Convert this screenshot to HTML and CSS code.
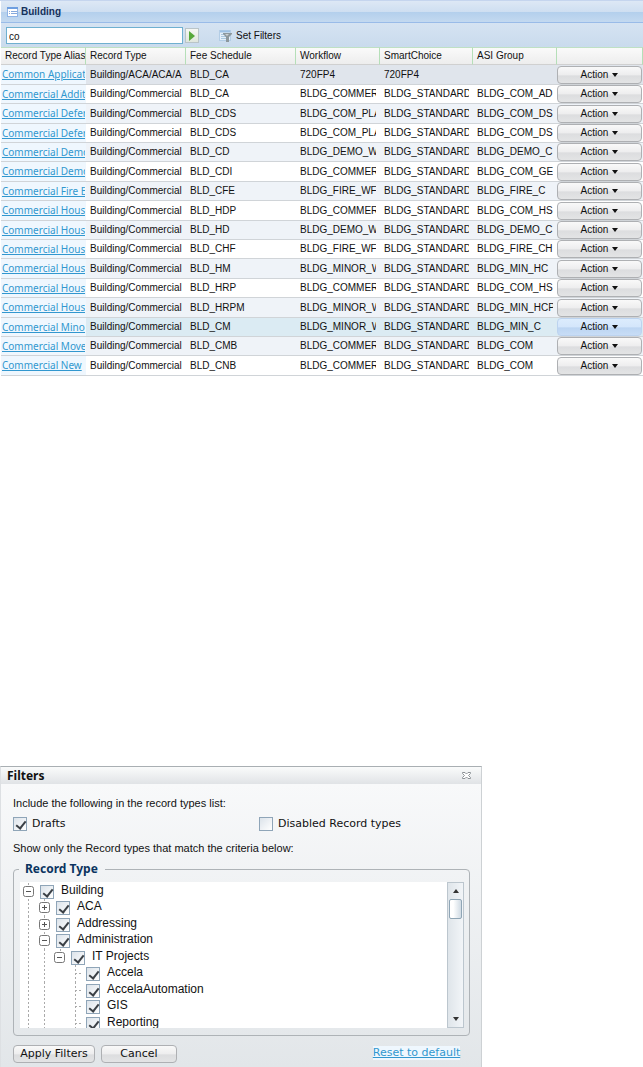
FILE: index.html
```
<!DOCTYPE html>
<html lang="en">
<head>
<meta charset="utf-8">
<title>Building</title>
<link rel="stylesheet" href="styles.css">
</head>
<body>
<main class="panel">
  <header class="panel-title">
    <svg class="list-icon" width="11" height="10" viewBox="0 0 11 10" aria-hidden="true"><rect x=".5" y=".5" width="10" height="9" fill="#fff" stroke="#8fb4e6"/><path d="M0 1h11" stroke="#6f9fe0" stroke-width="2"/><path d="M2 4.500h1M4 4.500h6M2 6.500h1M4 6.500h6" stroke="#86a9dc"/></svg>
    <h1>Building</h1>
  </header>
  <form class="toolbar">
    <input class="search" type="text" value="co" aria-label="Search record types">
    <button class="go" type="button" aria-label="Search"><svg width="6" height="10" viewBox="0 0 6 10"><path d="M0 0l6 5-6 5z" fill="#57a83a"/></svg></button>
    <button class="set-filters" type="button">
      <svg width="13" height="13" viewBox="0 0 13 13" aria-hidden="true"><rect x=".5" y="1.500" width="11" height="10" fill="#e4effa" stroke="#b3cde6"/><path d="M1 2.500h10" stroke="#9cc0e4" stroke-width="2"/><path d="M2 5.500h5M2 7.500h5M2 9.500h5" stroke="#a9c7df"/><path d="M4 4h9v1L10 8v5H7V8L4 5z" fill="#8c979d"/><path d="M6 5h4L8 7z" fill="#c9d0d3"/></svg>
      Set Filters
    </button>
  </form>
  <table class="records">
    <colgroup><col class="c-alias"><col class="c-type"><col class="c-fee"><col class="c-flow"><col class="c-smart"><col class="c-asi"><col class="c-action"></colgroup>
    <thead><tr><th>Record Type Alias</th><th>Record Type</th><th>Fee Schedule</th><th>Workflow</th><th>SmartChoice</th><th>ASI Group</th><th aria-label="Actions"></th></tr></thead>
    <tbody id="rows"></tbody>
  </table>
</main>

<section class="dialog" role="dialog" aria-labelledby="dialog-title">
  <header class="dialog-head">
    <h2 id="dialog-title">Filters</h2>
    <button class="close" type="button" aria-label="Close"><svg width="9" height="7" viewBox="0 0 9 7"><path d="M.5 .5h2.500l1.500 1.500L6 .5h2.500v1L6.500 3.500l2 2v1H6L4.500 5 3 6.500H.5v-1l2-2-2-2z" fill="#fff" stroke="#8d9296"/></svg></button>
  </header>
  <form class="dialog-body">
    <p>Include the following in the record types list:</p>
    <div class="options">
      <label><input class="check" type="checkbox" checked> Drafts</label>
      <label><input class="check" type="checkbox"> Disabled Record types</label>
    </div>
    <p>Show only the Record types that match the criteria below:</p>
    <fieldset>
      <legend>Record Type</legend>
      <div class="tree-box">
        <ul class="tree" id="tree"></ul>
        <div class="scrollbar">
          <button type="button" aria-label="Scroll up"><svg width="6" height="4" viewBox="0 0 6 4"><path d="M0 4l3-4 3 4z" fill="#333"/></svg></button>
          <span class="thumb"></span>
          <button class="down" type="button" aria-label="Scroll down"><svg width="6" height="4" viewBox="0 0 6 4"><path d="M0 0l3 4 3-4z" fill="#333"/></svg></button>
        </div>
      </div>
    </fieldset>
    <footer class="dialog-foot">
      <button class="btn apply" type="button">Apply Filters</button>
      <button class="btn cancel" type="button">Cancel</button>
      <a class="reset" href="#">Reset to default</a>
    </footer>
  </form>
</section>
<script src="app.js"></script>
</body>
</html>
```

FILE: styles.css
```
* { box-sizing: border-box; }

body {
  margin: 0;
  min-height: 100vh;
  display: flex;
  flex-direction: column;
  background: #fff;
  color: #111;
  font: 10px/14px "Liberation Sans", Arial, sans-serif;
}

button, input { font: inherit; color: inherit; margin: 0; padding: 0; }
h1, h2, p, ul { margin: 0; padding: 0; }
svg { display: block; flex: none; }

.panel { padding-left: 1px; border-top: 1px solid #c5d5ee; }

.panel-title {
  display: flex;
  align-items: center;
  gap: 3px;
  height: 22px;
  padding-left: 6px;
  background: linear-gradient(#dde8f5, #cfdff1 50%, #b3cfec 52%, #c3d9f0);
  border-bottom: 1px solid #99bbe8;
}
.panel-title h1 { font-size: 10px; line-height: 14px; color: #15315c; }

.toolbar {
  display: flex;
  align-items: center;
  height: 24px;
  padding: 1px 5px 0;
  background: linear-gradient(#d5e3f2, #c9dbed);
}
.search {
  width: 177px;
  height: 17px;
  padding: 2px 2px 0;
  border: 1px solid #6fb0d0;
  background: #fff;
  outline: 0;
}
.go {
  display: grid;
  place-items: center;
  width: 14px;
  height: 15px;
  margin-left: 2px;
  border: 1px solid #b9c4c8;
  background: linear-gradient(#f6f7f3, #dfe6dd);
}
.set-filters {
  display: flex;
  align-items: center;
  gap: 4px;
  margin-left: 20px;
  border: 0;
  background: none;
}

.records {
  width: 100%;
  table-layout: fixed;
  border-collapse: separate;
  border-spacing: 0;
}
.c-alias { width: 85px; }
.c-type { width: 100px; }
.c-fee { width: 110px; }
.c-flow { width: 84px; }
.c-smart { width: 93px; }
.c-asi { width: 84px; }
.c-action { width: 86px; }

.records th {
  height: 18px;
  padding: 0 0 0 4px;
  overflow: hidden;
  white-space: nowrap;
  text-align: left;
  font-weight: normal;
  background: linear-gradient(#fafafa, #ededed);
  border-top: 1px solid #bfe0c4;
  border-right: 1px solid #b5dfb8;
  border-bottom: 1px solid #d0d0d0;
}
.records td {
  height: 19px;
  padding: 0 0 0 4px;
  border-bottom: 1px solid #d0d4d8;
}
.records tr:nth-child(5n+1) td,
.records tr:nth-child(5n+3) td { height: 20px; }
.records tbody tr:nth-child(odd) { background: #eff3f8; }
.records tbody tr.selected { background: #e0e5ec; }
.records tbody tr.hover { background: #dbebf3; }
.records td.alias { padding: 0 0 0 1px; background: #eff7fe; }
.records td.action { padding: 0 1px 0 0; }
.clip { display: block; overflow: hidden; white-space: nowrap; margin-right: 4px; line-height: 16px; }
.alias .clip { margin-right: 1px; line-height: 14px; }
.alias a, .reset { color: #3197cf; text-decoration: underline; }
.alias a { font-family: "Noto Sans", sans-serif; }

.btn {
  display: flex;
  align-items: center;
  justify-content: center;
  height: 18px;
  border: 1px solid #aeb0b3;
  border-radius: 4px;
  background: linear-gradient(#f9f9f9, #ededee 50%, #dcdddf 55%, #e3e4e5);
}
.action .btn { width: 100%; gap: 4px; }
.hover .btn { border-color: #bcd3ef; background: linear-gradient(#dcecfd, #d4e6fb 50%, #bcd5f2 55%, #c8ddf6); }

.dialog {
  flex: 1;
  display: flex;
  flex-direction: column;
  width: 75%;
  margin-top: 390px;
  border: 1px solid #a9afb3;
  border-width: 1px 1px 0;
  border-right-color: #cdd1d4;
  border-left-color: #dde0e3;
  background: #e4e7ea;
}
.dialog-head {
  display: flex;
  align-items: center;
  justify-content: space-between;
  height: 17px;
  padding: 0 10px 0 6px;
  background: linear-gradient(#fafbfb, #e0e3e6);
}
.dialog-head h2 { font: bold 12px/17px "Noto Sans", sans-serif; }
.close { border: 0; background: none; }
.dialog-body {
  flex: 1;
  padding: 11px 11px 3px 12px;
  background: linear-gradient(#f8f9fa, #e2e6e9);
}
.dialog-body p { font-size: 11px; line-height: 16px; }
.options {
  display: grid;
  grid-template-columns: 246px 1fr;
  height: 29px;
  padding-bottom: 4px;
  align-items: center;
  font: 11px/14px "DejaVu Sans", sans-serif;
}
.options label { display: flex; align-items: center; gap: 5px; }

.check {
  appearance: none;
  flex: none;
  width: 14px;
  height: 14px;
  border: 1px solid #8fa5b8;
  background: linear-gradient(135deg, #dce3ea, #fff);
  position: relative;
}
.check:checked::after {
  content: "";
  position: absolute;
  left: 4px;
  top: 1px;
  width: 4px;
  height: 8px;
  border: solid #3b4046;
  border-width: 0 2px 2px 0;
  transform: rotate(38deg);
}

fieldset {
  min-width: 0;
  margin: 5px 0 0;
  padding: 0 5px 7px 6px;
  border: 1px solid #aeb3b7;
  border-radius: 4px;
}
legend {
  margin-left: -1px;
  padding: 0 7px 0 6px;
  font: bold 12px/16px "Noto Sans", sans-serif;
  color: #0b3460;
}
.tree-box { display: flex; height: 146px; margin-top: 5px; }
.tree { flex: 1; overflow: hidden; background: #fff; list-style: none; font-size: 12px; }
.tree li { display: flex; height: 16px; line-height: 14px; }
.tree li:nth-child(even) { height: 17px; }
.tree label { display: flex; gap: 7px; padding-left: 4px; }
.tree .check { margin-top: 2px; }
.tree li > i { flex: none; width: 16px; display: grid; justify-items: center; align-items: start; }
.tree li > i:nth-child(n+3) { width: 15px; }
.tree i.line { background: repeating-linear-gradient(#aaa 0 2px, #fff 2px 4px) 8px 0 / 1px 100% no-repeat; }
.tree i.leaf {
  background:
    repeating-linear-gradient(#aaa 0 2px, #fff 2px 4px) 8px 0 / 1px 100% no-repeat,
    repeating-linear-gradient(90deg, #aaa 0 2px, #fff 2px 4px) 8px 8px / 7px 1px no-repeat;
}
.tree button { margin-top: 3px; border: 0; background: #fff; }
.tree li:first-child { margin-top: 1px; }

.scrollbar {
  display: flex;
  flex-direction: column;
  width: 17px;
  padding: 0 1px;
  border: 1px solid #bcc6ce;
  background: linear-gradient(90deg, #dfe5ea, #f2f5f8);
}
.scrollbar button { display: grid; place-items: center; height: 16px; border: 0; background: none; }
.scrollbar .down { margin-top: auto; }
.thumb { height: 20px; border: 1px solid #8fa5b5; border-radius: 2px; background: linear-gradient(90deg, #fff 30%, #d0dbe4); }

.dialog-foot {
  display: flex;
  align-items: center;
  gap: 6px;
  margin-top: 9px;
  font: 11px/14px "DejaVu Sans", sans-serif;
}
.apply { width: 82px; }
.cancel { width: 76px; }
.reset { margin: 0 10px 2px auto; background: #eff7fe; }
```

FILE: app.js
```
const records = [
  ["Common Application", "Building/ACA/ACA/A", "BLD_CA", "720FP4", "720FP4", "", "selected"],
  ["Commercial Addition", "Building/Commercial", "BLD_CA", "BLDG_COMMERCIAL", "BLDG_STANDARD", "BLDG_COM_AD"],
  ["Commercial Deferred", "Building/Commercial", "BLD_CDS", "BLDG_COM_PLAN", "BLDG_STANDARD", "BLDG_COM_DS"],
  ["Commercial Deferred", "Building/Commercial", "BLD_CDS", "BLDG_COM_PLAN", "BLDG_STANDARD", "BLDG_COM_DS"],
  ["Commercial Demolition", "Building/Commercial", "BLD_CD", "BLDG_DEMO_W", "BLDG_STANDARD", "BLDG_DEMO_C"],
  ["Commercial Demolition", "Building/Commercial", "BLD_CDI", "BLDG_COMMERCIAL", "BLDG_STANDARD", "BLDG_COM_GE"],
  ["Commercial Fire B", "Building/Commercial", "BLD_CFE", "BLDG_FIRE_WF", "BLDG_STANDARD", "BLDG_FIRE_C"],
  ["Commercial Housing", "Building/Commercial", "BLD_HDP", "BLDG_COMMERCIAL", "BLDG_STANDARD", "BLDG_COM_HS"],
  ["Commercial Housing", "Building/Commercial", "BLD_HD", "BLDG_DEMO_W", "BLDG_STANDARD", "BLDG_DEMO_C"],
  ["Commercial Housing", "Building/Commercial", "BLD_CHF", "BLDG_FIRE_WF", "BLDG_STANDARD", "BLDG_FIRE_CH"],
  ["Commercial Housing", "Building/Commercial", "BLD_HM", "BLDG_MINOR_W", "BLDG_STANDARD", "BLDG_MIN_HC"],
  ["Commercial Housing", "Building/Commercial", "BLD_HRP", "BLDG_COMMERCIAL", "BLDG_STANDARD", "BLDG_COM_HS"],
  ["Commercial Housing", "Building/Commercial", "BLD_HRPM", "BLDG_MINOR_W", "BLDG_STANDARD", "BLDG_MIN_HCP"],
  ["Commercial Minor", "Building/Commercial", "BLD_CM", "BLDG_MINOR_W", "BLDG_STANDARD", "BLDG_MIN_C", "hover"],
  ["Commercial Move", "Building/Commercial", "BLD_CMB", "BLDG_COMMERCIAL", "BLDG_STANDARD", "BLDG_COM"],
  ["Commercial New", "Building/Commercial", "BLD_CNB", "BLDG_COMMERCIAL", "BLDG_STANDARD", "BLDG_COM"]
];

document.getElementById("rows").innerHTML = records.map(([alias, type, fee, flow, smart, asi, state = ""]) =>
  `<tr class="${state}"><td class="alias"><span class="clip"><a href="#">${alias}</a></span></td>` +
  [type, fee, flow, smart, asi].map(t => `<td><span class="clip">${t}</span></td>`).join("") +
  `<td class="action"><button class="btn" type="button">Action <svg width="6" height="4" viewBox="0 0 6 4"><path d="M0 0h6L3 4z" fill="#111"/></svg></button></td></tr>`
).join("");

// Each node: label, guide cells before the checkbox
const nodes = [
  ["Building", "-"],
  ["ACA", "|+"],
  ["Addressing", "|+"],
  ["Administration", "|-"],
  ["IT Projects", "||-"],
  ["Accela", "|| L"],
  ["AccelaAutomation", "|| L"],
  ["GIS", "|| L"],
  ["Reporting", "|| L"]
];

const toggle = open =>
  `<i class="line"><button type="button" aria-label="${open ? "Collapse" : "Expand"}"><svg width="11" height="11" viewBox="0 0 11 11"><rect x=".5" y=".5" width="10" height="10" rx="2" fill="#fff" stroke="#777"/><path d="M3 5.500h5${open ? "" : "M5.500 3v5"}" stroke="#555"/></svg></button></i>`;
const cells = { "|": '<i class="line"></i>', " ": "<i></i>", "L": '<i class="leaf"></i>', "+": toggle(false), "-": toggle(true) };

document.getElementById("tree").innerHTML = nodes.map(([label, guides]) =>
  `<li>${[...guides].map(g => cells[g]).join("")}<label><input class="check" type="checkbox" checked>${label}</label></li>`
).join("");

const search = document.querySelector(".search");
search.focus();
search.setSelectionRange(2, 2);
```
